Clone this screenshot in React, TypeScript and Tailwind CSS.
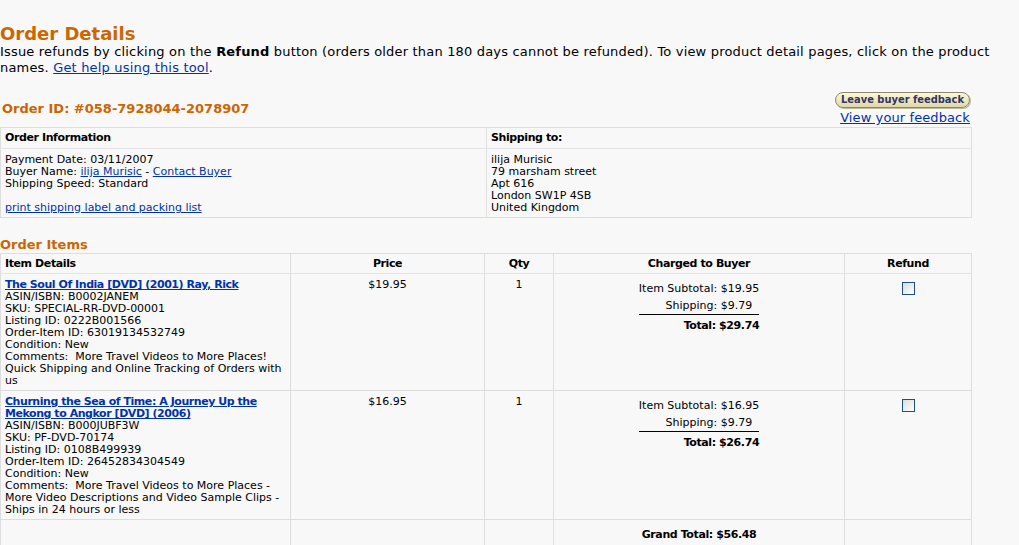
import React from "react";

const F = { fontFamily: '"DejaVu Sans", Verdana, sans-serif' };

function Checkbox() {
  return (
    <span className="inline-block w-[13px] h-[13px] border border-[#1c5180] bg-gradient-to-br from-[#dcdcd7] to-[#ffffff] align-middle" />
  );
}

function Charges({ sub, ship, total }: { sub: string; ship: string; total: string }) {
  return (
    <table className="mx-auto mt-[6px] border-collapse">
      <tbody>
        <tr>
          <td className="text-right leading-[17px]">Item Subtotal: {sub}</td>
        </tr>
        <tr>
          <td className="text-right leading-[17px] pr-[7px]">Shipping: {ship}</td>
        </tr>
        <tr>
          <td className="border-t border-black text-right font-bold tracking-[-0.4px] leading-[19px] pt-[1px]">Total: {total}</td>
        </tr>
      </tbody>
    </table>
  );
}

export default function App() {
  const link = "text-[#0033aa] underline";
  const thBase = "border border-[#dddddd] border-b-[#e4e4e4] border-b-dotted font-bold tracking-[-0.4px] text-[11px] px-[4px] pt-[1px] align-middle";
  const th = `${thBase} h-[21px]`;
  const th2 = `${thBase} h-[20px]`;
  const td = "border border-[#dddddd] text-[11px] leading-[12px] align-top px-[4px]";
  return (
    <div className="min-h-[545px] w-[1019px] bg-[#f8f8f8] text-black overflow-hidden" style={F}>
      <div className="pt-[24px]">
        <h1 className="text-[18px] font-bold text-[#cc6600] leading-[20px]">Order Details</h1>
        <p className="text-[13px] leading-[16px] pr-[20px] tracking-[0.18px]">
          Issue refunds by clicking on the <b>Refund</b> button (orders older than 180 days cannot be refunded). To view product detail pages, click on the product names.{" "}
          <span className={link}>Get help using this tool</span>.
        </p>
      </div>

      <div className="flex items-end justify-between w-[972px] mt-[16px] pb-[1px]">
        <div className="text-[13px] font-bold text-[#cc6600] pl-[2px] mb-[8px]">Order ID: #058-7928044-2078907</div>
        <div className="flex flex-col items-end pr-[2px]">
          <span
            className="inline-block h-[16px] px-[5px] rounded-full border border-[#8a8a6a] bg-gradient-to-b from-[#fbf8dc] to-[#e0d9a4] text-[#333366] font-bold text-[11px] leading-[14px] shadow-[1px_1px_0_#b8b8a0]"
            style={{ fontFamily: '"DejaVu Sans Condensed", "DejaVu Sans", sans-serif' }}
          >
            Leave buyer feedback
          </span>
          <span className={`${link} text-[13px] leading-[17px] mt-[1px] tracking-[0.1px]`}>View your feedback</span>
        </div>
      </div>

      <table className="w-[972px] border-collapse border border-[#dddddd]">
        <tbody>
          <tr>
            <td className={`${th} w-[486px] text-left`}>Order Information</td>
            <td className={`${th} text-left`}>Shipping to:</td>
          </tr>
          <tr>
            <td className={`${td} pt-[5px] pb-[3px]`}>
              <div>Payment Date: 03/11/2007</div>
              <div>
                Buyer Name: <span className={link}>ilija Murisic</span> - <span className={link}>Contact Buyer</span>
              </div>
              <div>Shipping Speed: Standard</div>
              <div>&nbsp;</div>
              <div className={link}>print shipping label and packing list</div>
            </td>
            <td className={`${td} pt-[5px] pb-[3px]`}>
              <div>ilija Murisic</div>
              <div>79 marsham street</div>
              <div>Apt 616</div>
              <div>London SW1P 4SB</div>
              <div>United Kingdom</div>
            </td>
          </tr>
        </tbody>
      </table>

      <h2 className="text-[13px] font-bold text-[#cc6600] mt-[19px] leading-[16px]">Order Items</h2>

      <table className="w-[972px] border-collapse border border-[#dddddd]">
        <tbody>
          <tr>
            <td className={`${th2} w-[290px] text-left`}>Item Details</td>
            <td className={`${th2} w-[194px] text-center`}>Price</td>
            <td className={`${th2} w-[69px] text-center`}>Qty</td>
            <td className={`${th2} w-[291px] text-center`}>Charged to Buyer</td>
            <td className={`${th2} text-center`}>Refund</td>
          </tr>
          <tr>
            <td className={`${td} pt-[5px] pb-[3px] h-[115px]`}>
              <div className={`${link} font-bold tracking-[-0.45px]`}>The Soul Of India [DVD] (2001) Ray, Rick</div>
              <div>ASIN/ISBN: B0002JANEM</div>
              <div>SKU: SPECIAL-RR-DVD-00001</div>
              <div>Listing ID: 0222B001566</div>
              <div>Order-Item ID: 63019134532749</div>
              <div>Condition: New</div>
              <div>Comments:&nbsp; More Travel Videos to More Places! Quick Shipping and Online Tracking of Orders with us</div>
            </td>
            <td className={`${td} text-center pt-[5px]`}>$19.95</td>
            <td className={`${td} text-center pt-[5px]`}>1</td>
            <td className={`${td}`}>
              <Charges sub="$19.95" ship="$9.79" total="$29.74" />
            </td>
            <td className={`${td} text-center pt-[8px]`}>
              <Checkbox />
            </td>
          </tr>
          <tr>
            <td className={`${td} pt-[5px] pb-[3px] h-[127px]`}>
              <div className={`${link} font-bold tracking-[-0.45px]`}>Churning the Sea of Time: A Journey Up the Mekong to Angkor [DVD] (2006)</div>
              <div>ASIN/ISBN: B000JUBF3W</div>
              <div>SKU: PF-DVD-70174</div>
              <div>Listing ID: 0108B499939</div>
              <div>Order-Item ID: 26452834304549</div>
              <div>Condition: New</div>
              <div>Comments:&nbsp; More Travel Videos to More Places - More Video Descriptions and Video Sample Clips - Ships in 24 hours or less</div>
            </td>
            <td className={`${td} text-center pt-[5px]`}>$16.95</td>
            <td className={`${td} text-center pt-[5px]`}>1</td>
            <td className={`${td}`}>
              <Charges sub="$16.95" ship="$9.79" total="$26.74" />
            </td>
            <td className={`${td} text-center pt-[8px]`}>
              <Checkbox />
            </td>
          </tr>
          <tr>
            <td className={`${td} h-[30px]`}></td>
            <td className={`${td}`}></td>
            <td className={`${td}`}></td>
            <td className={`${td} text-center font-bold tracking-[-0.4px] pt-[9px]`}>Grand Total: $56.48</td>
            <td className={`${td}`}></td>
          </tr>
        </tbody>
      </table>
    </div>
  );
}
